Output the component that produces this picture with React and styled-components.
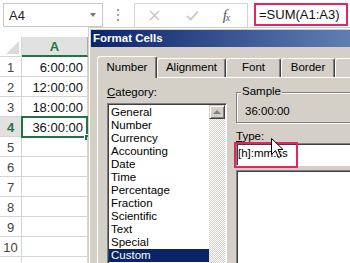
import React from 'react'
import styled, { createGlobalStyle } from 'styled-components'

const GlobalStyle = createGlobalStyle`
  html, body {
    margin: 0;
    padding: 0;
  }
  body {
    width: 350px;
    height: 263px;
    overflow: hidden;
    background: #fff;
    font-family: 'Liberation Sans', Arial, sans-serif;
  }
`

const Page = styled.div`
  position: relative;
  width: 350px;
  height: 263px;
  overflow: hidden;
`

/* ---------- formula bar ---------- */

const FormulaBar = styled.div`
  display: flex;
  align-items: flex-start;
  height: 30px;
  padding: 3px 0 0 3px;
  box-sizing: border-box;
`

const NameBox = styled.div`
  display: flex;
  align-items: center;
  justify-content: space-between;
  width: 100px;
  height: 24px;
  padding: 0 6px 0 5px;
  box-sizing: border-box;
  border: 1px solid #c6c6c6;
  font-size: 13px;
  color: #222;
`

const Caret = styled.span`
  width: 0;
  height: 0;
  border-left: 3.5px solid transparent;
  border-right: 3.5px solid transparent;
  border-top: 4px solid #777;
`

const Splitter = styled.div`
  display: flex;
  flex-direction: column;
  justify-content: center;
  gap: 3px;
  width: 3px;
  height: 24px;
  margin: 0 14px 0 14px;
  span {
    width: 2px;
    height: 2px;
    background: #a0a0a0;
  }
`

const ButtonBox = styled.div`
  display: flex;
  width: 114px;
  height: 24px;
  box-sizing: border-box;
  border: 1px solid #d4d4d4;
  border-bottom: none;
`

const BarButton = styled.div`
  display: flex;
  align-items: center;
  justify-content: center;
  width: ${({ w }) => w}px;
  height: 22px;
  color: #6a6a6a;
`

const Fx = styled.span`
  font-family: 'Liberation Serif', 'Times New Roman', serif;
  font-style: italic;
  font-size: 15px;
  color: #5a5a5a;
  letter-spacing: -1px;
  sub {
    font-size: 10px;
    vertical-align: -1px;
  }
`

const FormulaInput = styled.div`
  width: 94px;
  height: 23px;
  margin-left: 6px;
  padding-left: 3px;
  box-sizing: border-box;
  border: 2px solid #e2265f;
  font-size: 13px;
  line-height: 19px;
  color: #111;
`

/* ---------- sheet ---------- */

const Sheet = styled.div`
  margin-top: 7px;
`

const HeaderRow = styled.div`
  display: flex;
  height: 20px;
`

const Corner = styled.div`
  position: relative;
  width: 22px;
  height: 20px;
  box-sizing: border-box;
  border-right: 1px solid #d4d4d4;
  border-bottom: 1px solid #d4d4d4;
  svg {
    position: absolute;
    right: 2px;
    bottom: 2px;
  }
`

const ColHeader = styled.div`
  width: 66px;
  height: 20px;
  box-sizing: border-box;
  background: #e1e1e1;
  border-right: 1px solid #ababab;
  border-bottom: 2px solid #217346;
  color: #217346;
  font-weight: bold;
  font-size: 13px;
  line-height: 19px;
  text-align: center;
`

const Row = styled.div`
  display: flex;
  height: 20px;
`

const RowHead = styled.div`
  width: 22px;
  height: 20px;
  box-sizing: border-box;
  padding-top: 2px;
  border-right: 1px solid #d4d4d4;
  border-bottom: 1px solid #d4d4d4;
  background: ${({ active }) => (active ? '#e1e1e1' : '#fff')};
  color: ${({ active }) => (active ? '#217346' : '#444')};
  font-weight: ${({ active }) => (active ? 'bold' : 'normal')};
  font-size: 13px;
  line-height: 18px;
  text-align: center;
`

const Cell = styled.div`
  position: relative;
  width: 66px;
  height: 20px;
  box-sizing: border-box;
  padding: 2px 4px 0 0;
  border-right: 1px solid #d4d4d4;
  border-bottom: 1px solid #d4d4d4;
  font-size: 13px;
  line-height: 18px;
  text-align: right;
  color: #111;
`

const Selection = styled.div`
  position: absolute;
  left: -1px;
  top: -1px;
  right: -1px;
  bottom: -2px;
  border: 2px solid #217346;
  &::after {
    content: '';
    position: absolute;
    right: -4px;
    bottom: -4px;
    width: 5px;
    height: 5px;
    background: #217346;
    border-left: 1px solid #fff;
    border-top: 1px solid #fff;
  }
`

/* ---------- dialog ---------- */

const Dialog = styled.div`
  position: absolute;
  left: 88px;
  top: 27px;
  width: 478px;
  height: 320px;
  padding: 2px;
  box-sizing: border-box;
  background: #d4d0c8;
  border: 1px solid;
  border-color: #d4d0c8 #404040 #404040 #d4d0c8;
  box-shadow: inset 1px 1px 0 #fff, inset -1px -1px 0 #808080;
  font-size: 11.5px;
  color: #000;
`

const TitleBar = styled.div`
  height: 17px;
  padding-left: 2px;
  background: linear-gradient(to right, #0a246a, #a6caf0);
  color: #fff;
  font-weight: bold;
  font-size: 11.5px;
  line-height: 17px;
`

const TabStrip = styled.div`
  display: flex;
  align-items: flex-end;
  height: 21px;
  margin: 9px 0 0 6px;
  position: relative;
  z-index: 1;
`

const Tab = styled.div`
  width: ${({ w }) => w}px;
  height: ${({ active }) => (active ? 22 : 19)}px;
  margin-bottom: ${({ active }) => (active ? -1 : 0)}px;
  box-sizing: border-box;
  padding-top: ${({ active }) => (active ? 2 : 0)}px;
  background: #d4d0c8;
  border: 1px solid;
  border-bottom: none;
  border-color: #fff #404040 transparent #fff;
  border-radius: 3px 3px 0 0;
  box-shadow: inset -1px 0 0 #808080;
  line-height: 17px;
  text-align: center;
  white-space: nowrap;
`

const Panel = styled.div`
  display: flex;
  gap: 9px;
  margin-left: 6px;
  padding: 8px 0 0 9px;
  border-top: 1px solid #fff;
  border-left: 1px solid #fff;
`

const Column = styled.div`
  display: flex;
  flex-direction: column;
  width: ${({ w }) => w}px;
`

const Label = styled.div`
  height: 13px;
  line-height: 13px;
  margin: ${({ m }) => m || '0'};
`

const ListBox = styled.div`
  display: flex;
  height: ${({ h }) => h}px;
  margin-top: 4px;
  padding: 1px;
  box-sizing: border-box;
  background: #fff;
  border: 1px solid;
  border-color: #808080 #fff #fff #808080;
  box-shadow: inset 1px 1px 0 #404040;
`

const Items = styled.div`
  flex: 1;
  padding-top: 1px;
`

const Item = styled.div`
  height: 13px;
  padding-left: 2px;
  line-height: 13px;
  background: ${({ selected }) => (selected ? '#0a246a' : 'transparent')};
  color: ${({ selected }) => (selected ? '#fff' : '#000')};
`

const ScrollTrack = styled.div`
  width: 16px;
  background: repeating-conic-gradient(#d4d0c8 0 25%, #fff 0 50%) 0 0 / 2px 2px;
`

const ScrollButton = styled.div`
  display: flex;
  align-items: center;
  justify-content: center;
  height: 14px;
  box-sizing: border-box;
  background: #d4d0c8;
  border: 1px solid;
  border-color: #d4d0c8 #404040 #404040 #d4d0c8;
  box-shadow: inset 1px 1px 0 #fff, inset -1px -1px 0 #808080;
  span {
    width: 0;
    height: 0;
    border-left: 4px solid transparent;
    border-right: 4px solid transparent;
    border-bottom: 4px solid #808080;
  }
`

const GroupBox = styled.div`
  position: relative;
  margin-top: 6px;
  padding: 12px 8px 4px;
  border: 1px solid #808080;
  box-shadow: inset 1px 1px 0 #fff, 1px 1px 0 #fff;
  line-height: 13px;
`

const Legend = styled.span`
  position: absolute;
  left: 4px;
  top: -8px;
  padding: 0 1px;
  background: #d4d0c8;
  line-height: 13px;
`

const TypeInput = styled.div`
  position: relative;
  height: 23px;
  padding: 3px 0 0 1px;
  box-sizing: border-box;
  background: #fff;
  border: 1px solid;
  border-color: #808080 #fff #fff #808080;
  box-shadow: inset 1px 1px 0 #404040;
  line-height: 13px;
`

const Highlight = styled.div`
  position: absolute;
  left: -3px;
  top: -2px;
  width: 64px;
  height: 26px;
  box-sizing: border-box;
  border: 2px solid #e2265f;
`

const Cursor = styled.svg`
  position: absolute;
  left: 271px;
  top: 138px;
`

const categories = [
  'General', 'Number', 'Currency', 'Accounting', 'Date', 'Time',
  'Percentage', 'Fraction', 'Scientific', 'Text', 'Special', 'Custom',
]

const values = ['6:00:00', '12:00:00', '18:00:00', '36:00:00']

const App = () => {
  return (
    <>
      <GlobalStyle />
      <Page>
        <FormulaBar>
          <NameBox>
            A4
            <Caret />
          </NameBox>
          <Splitter>
            <span />
            <span />
            <span />
          </Splitter>
          <ButtonBox>
            <BarButton w={38}>
              <svg width="11" height="11" viewBox="0 0 11 11">
                <path d="M1 1 L10 10 M10 1 L1 10" stroke="#c3c3c3" strokeWidth="1.4" />
              </svg>
            </BarButton>
            <BarButton w={38}>
              <svg width="13" height="11" viewBox="0 0 13 11">
                <path d="M1 6 L4.5 9.5 L12 1.5" fill="none" stroke="#c3c3c3" strokeWidth="1.6" />
              </svg>
            </BarButton>
            <BarButton w={30}>
              <Fx>
                f<sub>x</sub>
              </Fx>
            </BarButton>
          </ButtonBox>
          <FormulaInput>=SUM(A1:A3)</FormulaInput>
        </FormulaBar>

        <Sheet>
          <HeaderRow>
            <Corner>
              <svg width="13" height="13" viewBox="0 0 13 13">
                <polygon points="13,0 13,13 0,13" fill="#dadada" />
              </svg>
            </Corner>
            <ColHeader>A</ColHeader>
          </HeaderRow>
          {Array.from({ length: 11 }, (_, i) => (
            <Row key={i}>
              {/* row 11 sits below the window edge, only its gridlines show */}
              <RowHead active={i === 3}>{i < 10 ? i + 1 : ''}</RowHead>
              <Cell>
                {values[i]}
                {i === 3 && <Selection />}
              </Cell>
            </Row>
          ))}
        </Sheet>

        <Dialog>
          <TitleBar>Format Cells</TitleBar>
          <TabStrip>
            <Tab w={60} active>Number</Tab>
            <Tab w={69}>Alignment</Tab>
            <Tab w={55}>Font</Tab>
            <Tab w={54}>Border</Tab>
            <Tab w={44} />
          </TabStrip>
          <Panel>
            <Column w={120}>
              <Label>
                <u>C</u>ategory:
              </Label>
              <ListBox h={175}>
                <Items>
                  {categories.map((c) => (
                    <Item key={c} selected={c === 'Custom'}>
                      {c}
                    </Item>
                  ))}
                </Items>
                <ScrollTrack>
                  <ScrollButton>
                    <span />
                  </ScrollButton>
                </ScrollTrack>
              </ListBox>
            </Column>
            <Column w={220}>
              <GroupBox>
                <Legend>Sample</Legend>
                36:00:00
              </GroupBox>
              <Label m="7px 0 0">
                <u>T</u>ype:
              </Label>
              <TypeInput>
                [h]:mm:ss
                <Highlight />
              </TypeInput>
              <ListBox h={100}>
                <Items />
              </ListBox>
            </Column>
          </Panel>
        </Dialog>

        <Cursor width="13" height="21" viewBox="0 0 13 21">
          <path
            d="M0.5 0.5 L0.5 16.5 L4.5 12.5 L7.5 19.5 L10 18.5 L7 11.5 L12 11.5 Z"
            fill="#fff"
            stroke="#000"
            strokeWidth="1"
            strokeLinejoin="miter"
          />
        </Cursor>
      </Page>
    </>
  )
}

export default App
